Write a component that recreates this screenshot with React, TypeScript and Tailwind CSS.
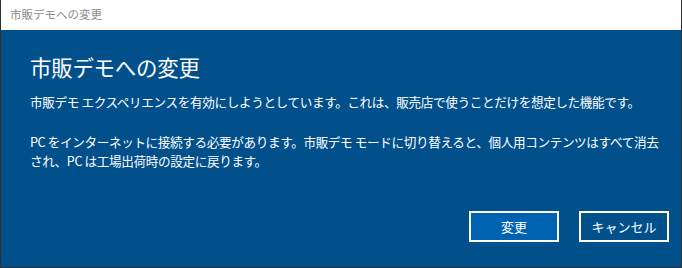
const jp = { fontFamily: '"Noto Sans CJK JP", "Noto Sans", sans-serif' }

export default function App() {
  return (
    <div
      className="flex h-[268px] w-[682px] flex-col border-x border-b border-[#2f2f2f] bg-white"
      style={jp}
    >
      <div className="flex h-[30px] shrink-0 items-center pl-[9px] text-[11.5px] text-[#8c8c8c]">
        市販デモへの変更
      </div>

      <div className="flex flex-1 flex-col bg-[#01508c] pl-[29px] pr-[12px] text-white">
        <h1 className="mt-[22px] text-[21.5px] leading-[30px] font-normal tracking-[-0.3px]">
          市販デモへの変更
        </h1>
        <div className="mt-[10px] text-[12.6px] leading-[19px] tracking-[-0.36px]">
          <p className="whitespace-nowrap">
            市販デモ エクスペリエンスを有効にしようとしています。これは、販売店で使うことだけを想定した機能です。
          </p>
          <p className="mt-[21px] whitespace-nowrap">
            PC をインターネットに接続する必要があります。市販デモ モードに切り替えると、個人用コンテンツはすべて消去
            <br />
            され、PC は工場出荷時の設定に戻ります。
          </p>
        </div>

        <div className="mt-auto mb-[25px] flex justify-end gap-[20px]">
          <button
            type="button"
            className="h-[31px] w-[90px] border-2 border-white bg-[#0063b1] text-[13px] text-white"
          >
            変更
          </button>
          <button
            type="button"
            className="h-[31px] w-[90px] border-2 border-white bg-[#01508c] text-[13px] text-white"
          >
            キャンセル
          </button>
        </div>
      </div>
    </div>
  )
}
